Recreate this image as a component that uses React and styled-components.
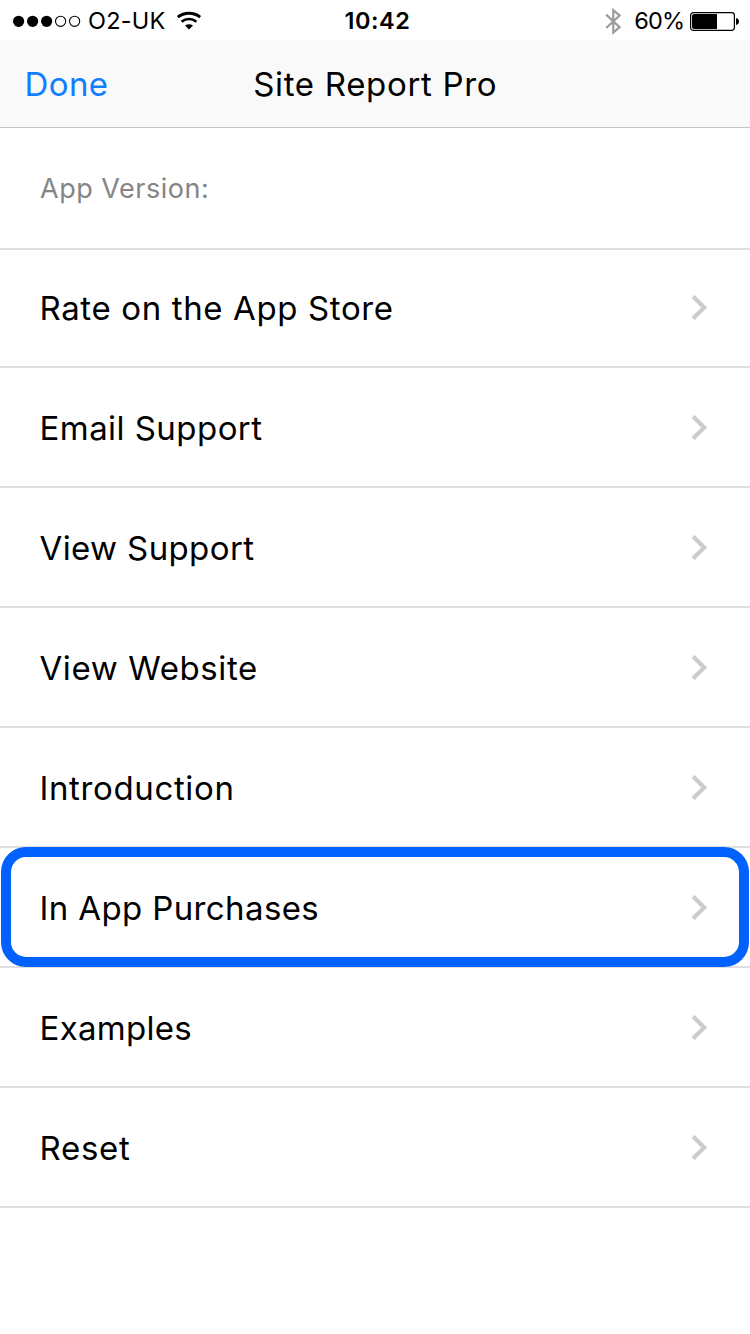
import React from 'react';
import styled, { createGlobalStyle } from 'styled-components';

const GlobalStyle = createGlobalStyle`
    * {
        box-sizing: border-box;
    }

    body {
        margin: 0;
        background: #fff;
        color: #000;
        font-family: Inter, "Liberation Sans", sans-serif;
    }
`

const Screen = styled.div`
    width: 750px;
    min-height: 1334px;
    background: #fff;
`

const StatusBar = styled.header`
    display: grid;
    grid-template-columns: 1fr auto 1fr;
    align-items: center;
    height: 40px;
    padding: 0 11px 0 13px;
    font-size: 23.5px;
    line-height: 40px;
    white-space: nowrap;
`

const StatusGroup = styled.div`
    display: flex;
    align-items: center;
    justify-content: ${({ end }) => end ? 'flex-end' : 'flex-start'};
    height: 40px;

    > svg {
        display: block;
        flex: none;
    }
`

const Carrier = styled.span`
    margin: 1px 10px 0 7px;
    letter-spacing: 0.25px;
`

const Clock = styled.time`
    margin-top: 1px;
    padding-left: 3px;
    font-weight: 600;
    letter-spacing: 0.6px;
`

const BatteryLevel = styled.span`
    margin: 1px 5.5px 0 12px;
    letter-spacing: -0.7px;
`

const NavBar = styled.nav`
    display: grid;
    grid-template-columns: 1fr auto 1fr;
    align-items: center;
    height: 88px;
    padding: 1px 24px 0;
    border-bottom: 1px solid #c4c4c6;
    background: #f9f9f9;
    font-size: 33px;
    line-height: 44px;
`

const DoneButton = styled.button`
    justify-self: start;
    padding: 0 0 0 0.5px;
    border: 0;
    background: none;
    color: #107fff;
    font: inherit;
    letter-spacing: 0.4px;
`

const Title = styled.h1`
    margin: 0;
    padding-left: 0.5px;
    font-size: 33px;
    font-weight: 400;
    letter-spacing: 0.68px;
`

const VersionRow = styled.div`
    display: flex;
    align-items: center;
    height: 122px;
    padding: 1px 40px 0;
    border-bottom: 2px solid #dfdfdf;
    color: #858585;
    font-size: 27px;
    line-height: 33px;
    letter-spacing: 0.5px;
`

const Menu = styled.ul`
    margin: 0;
    padding: 0;
    list-style: none;
`

const MenuRow = styled.li`
    position: relative;
    display: flex;
    align-items: center;
    justify-content: space-between;
    height: 120px;
    padding: 1px 42px 0 39.5px;
    border-bottom: 2px solid #dfdfdf;

    &:first-child {
        height: 118px;
        padding-top: 0;
        padding-bottom: 1px;
    }
`

const Label = styled.span`
    padding-top: 1px;
    font-size: 33px;
    line-height: 44px;
    letter-spacing: ${({ spacing }) => spacing}px;
`

const Highlight = styled.span`
    position: absolute;
    top: -1px;
    left: 1px;
    right: 1px;
    height: 120px;
    border: 10px solid #0061ff;
    border-radius: 25px;
    pointer-events: none;
`

const items = [
    { label: 'Rate on the App Store', spacing: 0.63 },
    { label: 'Email Support', spacing: 0.45 },
    { label: 'View Support', spacing: 0.38 },
    { label: 'View Website', spacing: 0.6 },
    { label: 'Introduction', spacing: 0.63 },
    { label: 'In App Purchases', spacing: 0.38 },
    { label: 'Examples', spacing: 0.3 },
    { label: 'Reset', spacing: 0.7 },
]

function Signal() {
    return (
        <svg width="68" height="12" viewBox="0 0 68 12">
            {[0, 1, 2].map(i => <circle key={i} cx={5.6 + i * 14} cy="6.3" r="5.6" />)}
            {[3, 4].map(i => <circle key={i} cx={5.6 + i * 14} cy="6.3" r="5.1" fill="none" stroke="#000" strokeWidth="1.1" />)}
        </svg>
    )
}

function Wifi() {
    return (
        <svg width="26" height="20" viewBox="0 0 26 20">
            <path d="M1.8 6.1C8.3 1 17.7 1 24.2 6.1" fill="none" stroke="#000" strokeWidth="2.9" />
            <path d="M5.6 10.7c4.3-3.6 10.5-3.6 14.8 0" fill="none" stroke="#000" strokeWidth="2.7" />
            <path d="M9 14.6c2.4-1.9 5.6-1.9 8 0l-4 4z" />
        </svg>
    )
}

function Bluetooth() {
    return (
        <svg width="17" height="28" viewBox="0 0 17 28" fill="none" stroke="#9c9c9c" strokeWidth="2.2">
            <path d="M1.2 7.6 14.6 20.2 8.3 25.6V3.2l6.3 5.4L1.2 21" />
        </svg>
    )
}

function Battery() {
    return (
        <svg width="49" height="20" viewBox="0 0 49 20">
            <rect x=".6" y="1.6" width="43.8" height="17.8" rx="2.8" fill="none" stroke="#000" strokeWidth="1.2" />
            <path d="M4 3h23v15H4a2 2 0 0 1-2-2V5a2 2 0 0 1 2-2z" />
            <path d="M46 7c4 .8 4 6.2 0 7z" />
        </svg>
    )
}

function Chevron() {
    return (
        <svg width="17" height="27" viewBox="0 0 17 27" fill="none" stroke="#ccc" strokeWidth="4.2">
            <path d="M2.1 2.4 13.2 13.5 2.1 24.6" />
        </svg>
    )
}

export default function App() {
    const highlighted = 'In App Purchases'

    return (
        <Screen>
            <GlobalStyle />
            <StatusBar>
                <StatusGroup>
                    <Signal />
                    <Carrier>O2-UK</Carrier>
                    <Wifi />
                </StatusGroup>
                <Clock>10:42</Clock>
                <StatusGroup end>
                    <Bluetooth />
                    <BatteryLevel>60%</BatteryLevel>
                    <Battery />
                </StatusGroup>
            </StatusBar>
            <NavBar>
                <DoneButton>Done</DoneButton>
                <Title>Site Report Pro</Title>
            </NavBar>
            <VersionRow>App Version:</VersionRow>
            <Menu>
                {items.map(({ label, spacing }) => (
                    <MenuRow key={label}>
                        <Label spacing={spacing}>{label}</Label>
                        <Chevron />
                        {label === highlighted && <Highlight />}
                    </MenuRow>
                ))}
            </Menu>
        </Screen>
    )
}
